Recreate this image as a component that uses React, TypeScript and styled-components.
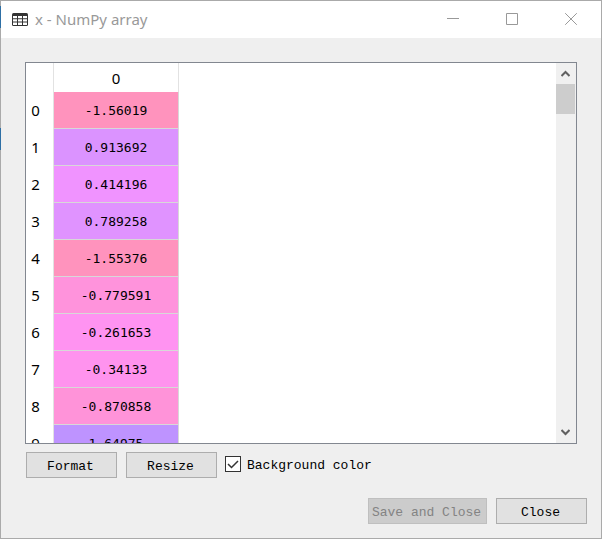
import React, { useState } from "react";
import styled, { createGlobalStyle } from "styled-components";

const GlobalStyle = createGlobalStyle`
  *, *::before, *::after { box-sizing: border-box; }
  body { margin: 0; background: #aaaaaa; }
  button { font: inherit; margin: 0; padding: 0; }
`;

const edge = "#aaaaaa";

/* The padding shows the window edge, with slivers of the desktop behind it. */
const Desktop = styled.div`
  height: 100vh;
  padding: 1px;
  background:
    linear-gradient(#2e6fa5, #2e6fa5) 0 6px / 1px 22px no-repeat,
    linear-gradient(#2e6fa5, #2e6fa5) 0 128px / 1px 22px no-repeat,
    ${edge};
`;

const Window = styled.main`
  display: flex;
  flex-direction: column;
  height: 100%;
  background: #efefef;
`;

const TitleBar = styled.header`
  display: flex;
  align-items: center;
  flex: none;
  height: 37px;
  padding: 0 1px 0 11px;
  background: #ffffff;
`;

const Title = styled.h1`
  flex: 1;
  margin: 0 0 0 7px;
  padding-bottom: 2px;
  font: 400 15px/20px "Noto Sans", sans-serif;
  color: #999999;
`;

const CaptionButton = styled.button`
  display: flex;
  align-items: center;
  justify-content: center;
  width: 59px;
  height: 37px;
  padding-bottom: 1px;
  border: 0;
  background: transparent;
`;

const Content = styled.div`
  display: flex;
  flex-direction: column;
  flex: 1;
  min-height: 0;
  padding: 24px 24px 14px;
`;

const Frame = styled.section`
  display: flex;
  flex: 1;
  min-height: 0;
  border: 1px solid #828790;
  background: #ffffff;
`;

const Viewport = styled.div`
  flex: 1;
  overflow: hidden;
`;

const Table = styled.table`
  border-collapse: separate;
  border-spacing: 0;
  table-layout: fixed;
  width: 153px;
`;

const Corner = styled.td`
  width: 28px;
  height: 29px;
  padding: 0;
  border-right: 1px solid #e2e2e2;
`;

const ColumnHead = styled.th`
  padding: 0;
  border-right: 1px solid #e2e2e2;
  font: 400 15px/20px "Noto Sans", sans-serif;
`;

const RowHead = styled.th`
  height: 37px;
  padding: 0 8px 2px 0;
  border-right: 1px solid #e2e2e2;
  font: 400 15px/20px "Noto Sans", sans-serif;
`;

const Cell = styled.td<{ $tint: string }>`
  height: 37px;
  padding: 2px 0 0;
  border-right: 1px solid #d8d8d8;
  border-bottom: 1px solid #d8d8d8;
  background: ${(p) => p.$tint};
  background-clip: padding-box;
  font: 400 13px/20px "DejaVu Sans Mono", monospace;
  text-align: center;
`;

const ScrollBar = styled.div`
  display: flex;
  flex-direction: column;
  flex: none;
  width: 20px;
  background: #f0f0f0;
`;

const ScrollTrack = styled.div`
  flex: 1;
`;

const ScrollThumb = styled.div`
  width: 19px;
  height: 30px;
  background: #cdcdcd;
`;

const ScrollButton = styled.button`
  display: flex;
  align-items: center;
  justify-content: center;
  width: 19px;
  height: 21px;
  border: 0;
  background: transparent;
`;

const Toolbar = styled.div`
  display: flex;
  align-items: center;
  flex: none;
  gap: 9px;
  margin-top: 8px;
  padding-left: 1px;
  font: 400 13px/16px "Liberation Mono", monospace;
`;

const Footer = styled(Toolbar)`
  justify-content: flex-end;
  margin: 20px -10px 0 0;
`;

const PushButton = styled.button<{ $wide?: boolean }>`
  width: ${(p) => (p.$wide ? 119 : 91)}px;
  height: 26px;
  padding: 3px 2px 0 0;
  border: 1px solid #adadad;
  background: #e1e1e1;
  color: #000000;
  white-space: nowrap;

  &:disabled {
    border-color: #bfbfbf;
    background: #cccccc;
    color: #838383;
  }
`;

const CheckLabel = styled.label`
  display: flex;
  align-items: center;
  gap: 6px;
  margin-left: -1px;
  padding-bottom: 2px;
`;

const CheckText = styled.span`
  padding-top: 3px;
`;

const CheckWrap = styled.span`
  display: grid;
  width: 16px;
  height: 16px;

  & > * { grid-area: 1 / 1; }
  svg { pointer-events: none; }
`;

const CheckInput = styled.input`
  appearance: none;
  width: 16px;
  height: 16px;
  margin: 0;
  border: 1px solid #333333;
  background: #ffffff;
`;

const rows = [
  { value: "-1.56019", tint: "#ff93bd" },
  { value: "0.913692", tint: "#db93ff" },
  { value: "0.414196", tint: "#f093ff" },
  { value: "0.789258", tint: "#e093ff" },
  { value: "-1.55376", tint: "#ff93bd" },
  { value: "-0.779591", tint: "#ff93dc" },
  { value: "-0.261653", tint: "#ff93f1" },
  { value: "-0.34133", tint: "#ff93ee" },
  { value: "-0.870858", tint: "#ff93d9" },
  { value: "1.64975", tint: "#be93ff" },
];

const TableIcon = () => (
  <svg width="16" height="16" viewBox="0 0 16 16" aria-hidden="true">
    <rect x="0" y="1" width="16" height="13" rx="1.500" fill="#333333" />
    <path
      fill="#ffffff"
      d="M1 4h4v2.300H1zM6 4h4v2.300H6zM11 4h4v2.300h-4zM1 7.300h4v2.300H1zM6 7.300h4v2.300H6zM11 7.300h4v2.300h-4zM1 10.600h4V13H1zM6 10.600h4V13H6zM11 10.600h4V13h-4z"
    />
  </svg>
);

const captions = [
  { label: "Minimize", d: "M0 5.500h12" },
  { label: "Maximize", d: "M.5.5h11v11H.5z" },
  { label: "Close window", d: "M.2.2l11.600 11.600M11.800.2L.2 11.800" },
];

const Chevron = ({ down }: { down?: boolean }) => (
  <svg width="9" height="7" viewBox="0 0 9 7" aria-hidden="true">
    <path
      d={down ? "M.5 1l4 4 4-4" : "M.5 6l4-4 4 4"}
      fill="none"
      stroke="#606060"
      strokeWidth="2"
    />
  </svg>
);

export default function App() {
  const [colored, setColored] = useState(true);

  return (
    <Desktop>
      <GlobalStyle />
      <Window>
        <TitleBar>
          <TableIcon />
          <Title>x - NumPy array</Title>
          {captions.map((c) => (
            <CaptionButton key={c.label} type="button" aria-label={c.label}>
              <svg width="12" height="12" viewBox="0 0 12 12" aria-hidden="true">
                <path d={c.d} fill="none" stroke="#999999" />
              </svg>
            </CaptionButton>
          ))}
        </TitleBar>
        <Content>
          <Frame>
            <Viewport>
              <Table>
                <thead>
                  <tr>
                    <Corner />
                    <ColumnHead scope="col">0</ColumnHead>
                  </tr>
                </thead>
                <tbody>
                  {rows.map((row, index) => (
                    <tr key={index}>
                      <RowHead scope="row">{index}</RowHead>
                      <Cell $tint={colored ? row.tint : "#ffffff"}>{row.value}</Cell>
                    </tr>
                  ))}
                </tbody>
              </Table>
            </Viewport>
            <ScrollBar>
              <ScrollButton type="button" aria-label="Scroll up">
                <Chevron />
              </ScrollButton>
              <ScrollTrack>
                <ScrollThumb />
              </ScrollTrack>
              <ScrollButton type="button" aria-label="Scroll down">
                <Chevron down />
              </ScrollButton>
            </ScrollBar>
          </Frame>
          <Toolbar>
            <PushButton type="button">Format</PushButton>
            <PushButton type="button">Resize</PushButton>
            <CheckLabel>
              <CheckWrap>
                <CheckInput
                  type="checkbox"
                  checked={colored}
                  onChange={(e) => setColored(e.target.checked)}
                />
                {colored && (
                  <svg width="16" height="16" viewBox="0 0 16 16" aria-hidden="true">
                    <path d="M3 8l3.500 3.500L13 5" fill="none" stroke="#333333" strokeWidth="1.500" />
                  </svg>
                )}
              </CheckWrap>
              <CheckText>Background color</CheckText>
            </CheckLabel>
          </Toolbar>
          <Footer>
            <PushButton type="button" $wide disabled>
              Save and Close
            </PushButton>
            <PushButton type="button">Close</PushButton>
          </Footer>
        </Content>
      </Window>
    </Desktop>
  );
}
